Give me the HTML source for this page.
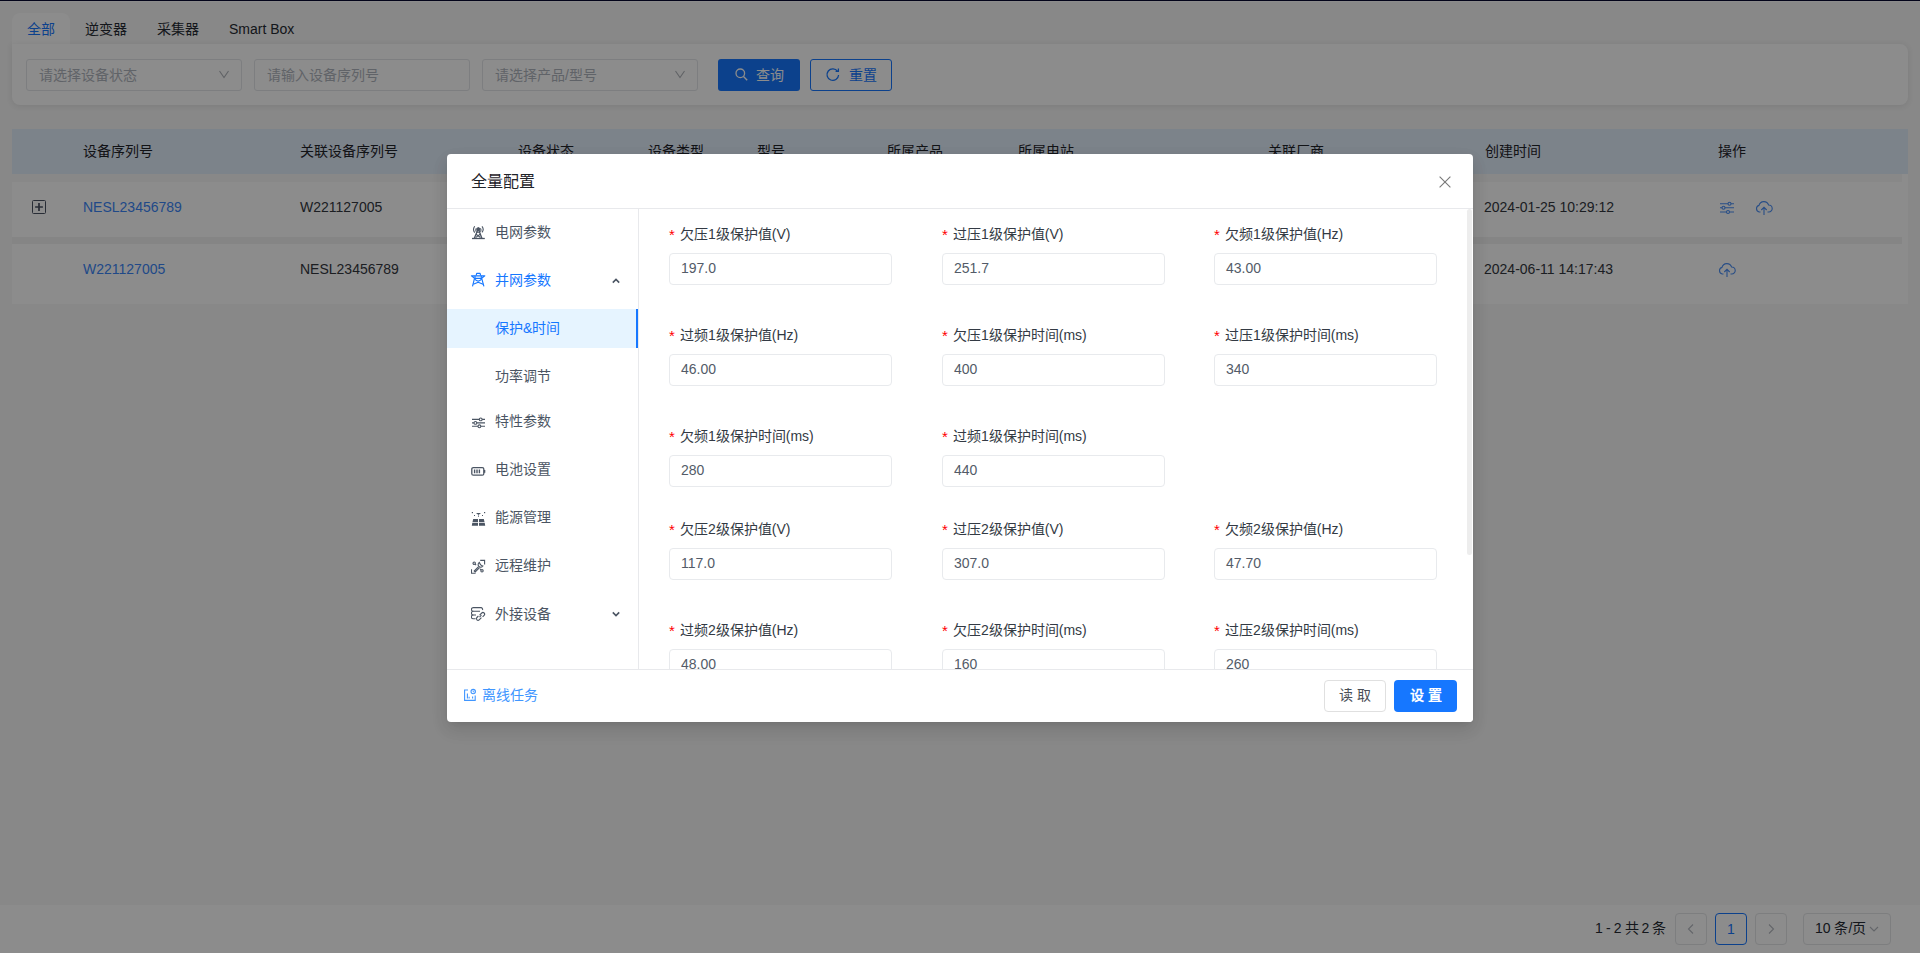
<!DOCTYPE html>
<html lang="zh-CN">
<head>
<meta charset="utf-8">
<style>
*{box-sizing:border-box;margin:0;padding:0}
html,body{width:1920px;height:953px;overflow:hidden}
body{position:relative;background:#f7f7f7;font-family:"Liberation Sans",sans-serif;font-size:14px;color:#1f2329}
.a{position:absolute;white-space:nowrap}
.topline{left:0;top:0;width:1920px;height:1px;background:#fff}
.tab-active{left:12px;top:13px;width:58px;height:32px;background:#fff;border-radius:8px 8px 0 0}
.tabtxt{top:19px;line-height:20px;font-size:14px;color:#262b33}
.filter{left:12px;top:44px;width:1896px;height:61px;background:#fff;border-radius:0 8px 8px 8px;box-shadow:0 1px 6px rgba(0,0,0,.09)}
.inp{top:59px;width:216px;height:32px;border:1px solid #e4e6ea;border-radius:3px;background:#fff}
.ph{top:65px;line-height:20px;color:#b0b5bd}
.chev{top:68px;width:14px;height:14px}
.btn{top:59px;height:32px;border-radius:3px}
.thead{left:12px;top:129px;width:1896px;height:45px;background:#e2eefc}
.th{top:141px;line-height:20px;color:#1f2329}
.row{left:12px;width:1896px;background:#fff}
.td{line-height:20px;color:#33373e}
.link{color:#3b86f7}
.pager{left:0;top:905px;width:1920px;height:48px;background:#fff}
.mask{left:0;top:0;width:1920px;height:953px;background:rgba(0,0,0,.45)}
.modal{left:447px;top:154px;width:1026px;height:568px;background:#fff;border-radius:4px;box-shadow:0 6px 16px 0 rgba(0,0,0,.08),0 3px 6px -4px rgba(0,0,0,.12),0 8px 18px 2px rgba(0,0,0,.05)}
.mtitle{font-size:16px;line-height:22px;color:#1f2329}
.mtxt{line-height:20px;color:#4b5563}
.mtxt.act{color:#1677ff}
.req{line-height:20px;color:#f00;font-size:15px}
.lab{line-height:20px;color:#333a44}
.finp{width:223px;height:32px;border:1px solid #e8eaed;border-radius:4px;background:#fff}
.fval{line-height:20px;color:#535b68}
</style>
</head>
<body>
<div class="a topline" style="top:1px"></div>
<!-- tabs -->
<div class="a tab-active"></div>
<div class="a filter"></div>
<div class="a tabtxt" style="left:27px;color:#1677ff">全部</div>
<div class="a tabtxt" style="left:85px">逆变器</div>
<div class="a tabtxt" style="left:157px">采集器</div>
<div class="a tabtxt" style="left:229px">Smart Box</div>
<!-- filter inputs -->
<div class="a inp" style="left:26px"></div>
<div class="a ph" style="left:39px">请选择设备状态</div>
<svg class="a chev" style="left:217px" viewBox="0 0 14 14"><path d="M2.5 3 L7 9.6 L11.5 3" fill="none" stroke="#b0b4ba" stroke-width="1.1"/></svg>
<div class="a inp" style="left:254px"></div>
<div class="a ph" style="left:267px">请输入设备序列号</div>
<div class="a inp" style="left:482px"></div>
<div class="a ph" style="left:495px">请选择产品/型号</div>
<svg class="a chev" style="left:673px" viewBox="0 0 14 14"><path d="M2.5 3 L7 9.6 L11.5 3" fill="none" stroke="#b0b4ba" stroke-width="1.1"/></svg>
<div class="a btn" style="left:718px;width:82px;background:#1677ff"></div>
<svg class="a" style="left:734px;top:67px;width:16px;height:16px" viewBox="0 0 16 16"><circle cx="6.3" cy="6.3" r="4.3" fill="none" stroke="#fff" stroke-width="1.3"/><path d="M9.5 9.5 L13.2 13.2" stroke="#fff" stroke-width="1.4"/></svg>
<div class="a" style="left:756px;top:65px;line-height:20px;color:#fff">查询</div>
<div class="a btn" style="left:810px;width:82px;border:1px solid #1677ff;background:#fff"></div>
<svg class="a" style="left:825px;top:67px;width:16px;height:16px" viewBox="0 0 16 16"><path d="M12.6 4.3 A5.8 5.8 0 1 0 13.6 8" fill="none" stroke="#1677ff" stroke-width="1.3"/><path d="M10.6 4.4 L13.4 4.4 L13.4 1.6" fill="none" stroke="#1677ff" stroke-width="1.3"/></svg>
<div class="a" style="left:849px;top:65px;line-height:20px;color:#1677ff">重置</div>

<!-- table -->
<div class="a thead"></div>
<div class="a th" style="left:83px">设备序列号</div>
<div class="a th" style="left:300px">关联设备序列号</div>
<div class="a th" style="left:518px">设备状态</div>
<div class="a th" style="left:648px">设备类型</div>
<div class="a th" style="left:757px">型号</div>
<div class="a th" style="left:887px">所属产品</div>
<div class="a th" style="left:1018px">所属电站</div>
<div class="a th" style="left:1268px">关联厂商</div>
<div class="a th" style="left:1485px">创建时间</div>
<div class="a th" style="left:1718px">操作</div>

<div class="a row" style="top:174px;height:130px"></div>
<div class="a" style="left:12px;top:174px;width:1890px;height:8px;background:#f8f8f8"></div>
<div class="a" style="left:12px;top:237px;width:1890px;height:7px;background:#f3f3f3"></div>
<div class="a" style="left:32px;top:200px;width:14px;height:14px;border:1px solid #4a5263;border-radius:1.5px;background:#fff"></div>
<svg class="a" style="left:32px;top:200px;width:14px;height:14px" viewBox="0 0 14 14"><path d="M3.1 7 H10.9 M7 3.1 V10.9" stroke="#4a5263" stroke-width="1.7"/></svg>
<div class="a td link" style="left:83px;top:197px">NESL23456789</div>
<div class="a td" style="left:300px;top:197px">W221127005</div>
<div class="a td" style="left:1484px;top:197px">2024-01-25 10:29:12</div>
<div class="a td link" style="left:83px;top:259px">W221127005</div>
<div class="a td" style="left:300px;top:259px">NESL23456789</div>
<div class="a td" style="left:1484px;top:259px">2024-06-11 14:17:43</div>

<!-- pager -->

<svg class="a" style="left:1719px;top:200px;width:16px;height:16px" viewBox="0 0 16 16" fill="none" stroke="#4a8ef5" stroke-width="1.1">
<path d="M1 3.7 H15 M1 7.7 H15 M1 12 H15"/>
<circle cx="10.5" cy="3.7" r="1.5" fill="#fff"/><circle cx="4.5" cy="7.7" r="1.5" fill="#fff"/><circle cx="9" cy="12" r="1.5" fill="#fff"/>
</svg>
<svg class="a" style="left:1755px;top:200px;width:18px;height:16px" viewBox="0 0 18 16" fill="none" stroke="#4a8ef5" stroke-width="1.1">
<path d="M5.5 12 H4.2 A3.4 3.4 0 0 1 4 5.4 A5 5 0 0 1 13.6 5 A3.5 3.5 0 0 1 13.8 12 H12.5"/>
<path d="M9 15 V7.5 M6.3 10 L9 7.3 L11.7 10"/>
</svg>
<svg class="a" style="left:1718px;top:262px;width:18px;height:16px" viewBox="0 0 18 16" fill="none" stroke="#4a8ef5" stroke-width="1.1">
<path d="M5.5 12 H4.2 A3.4 3.4 0 0 1 4 5.4 A5 5 0 0 1 13.6 5 A3.5 3.5 0 0 1 13.8 12 H12.5"/>
<path d="M9 15 V7.5 M6.3 10 L9 7.3 L11.7 10"/>
</svg>
<div class="a pager"></div>
<div class="a" style="left:1595px;top:918px;line-height:20px;color:#262b33;letter-spacing:-0.4px">1 - 2 共 2 条</div>
<div class="a" style="left:1675px;top:913px;width:32px;height:32px;border:1px solid #e3e5e8;border-radius:4px"></div>
<svg class="a" style="left:1684px;top:922px;width:14px;height:14px" viewBox="0 0 14 14" fill="none" stroke="#b5b9c0" stroke-width="1.1"><path d="M9 2.5 L4.5 7 L9 11.5"/></svg>
<div class="a" style="left:1715px;top:913px;width:32px;height:32px;border:1px solid #1677ff;border-radius:4px"></div>
<div class="a" style="left:1727px;top:919px;line-height:20px;color:#1677ff">1</div>
<div class="a" style="left:1755px;top:913px;width:32px;height:32px;border:1px solid #e3e5e8;border-radius:4px"></div>
<svg class="a" style="left:1764px;top:922px;width:14px;height:14px" viewBox="0 0 14 14" fill="none" stroke="#b5b9c0" stroke-width="1.1"><path d="M5 2.5 L9.5 7 L5 11.5"/></svg>
<div class="a" style="left:1803px;top:913px;width:88px;height:32px;border:1px solid #e3e5e8;border-radius:4px"></div>
<div class="a" style="left:1815px;top:918px;line-height:20px;color:#262b33">10 条/页</div>
<svg class="a" style="left:1868px;top:923px;width:12px;height:12px" viewBox="0 0 12 12" fill="none" stroke="#b5b9c0" stroke-width="1.1"><path d="M2 4 L6 8 L10 4"/></svg>


<div class="a mask"></div>

<!-- modal -->

<div class="a modal"></div>
<div class="a mtitle" style="left:471px;top:171px">全量配置</div>
<svg class="a" style="left:1437px;top:174px;width:16px;height:16px" viewBox="0 0 16 16"><path d="M2.6 2.6 L13.4 13.4 M13.4 2.6 L2.6 13.4" stroke="#7a7a7a" stroke-width="1.15"/></svg>
<div class="a" style="left:447px;top:208px;width:1026px;height:1px;background:#e8e9ec"></div>
<div class="a" style="left:638px;top:209px;width:1px;height:460px;background:#e8e9ec"></div>
<div class="a" style="left:447px;top:309px;width:191px;height:39px;background:#e6f4ff"></div>
<div class="a" style="left:636px;top:309px;width:2px;height:39px;background:#1677ff"></div>

<svg class="a" style="left:468px;top:222px;width:22px;height:20px" viewBox="0 0 22 20" fill="none" stroke="#4b5563" stroke-width="1.1">
<path d="M4 16.5 H16.8" stroke-width="1.3"/>
<path d="M6.3 16.2 L10.3 6.8 L13.9 16.2" stroke-width="1.3"/>
<path d="M8 12.2 L12.5 15.5 M12.4 12 L7.6 15.6 M8.8 10.2 H11.8"/>
<circle cx="10.3" cy="7.2" r="1.4" fill="#4b5563"/>
<path d="M6.7 4.2 Q4.3 7.5 6.7 10.6"/>
<path d="M8.3 6.2 Q7.1 8 8.3 9.7"/>
<path d="M14 4.4 Q16.4 7.5 14 10.4"/>
<path d="M12.5 6.2 Q13.6 8 12.5 9.7"/>
</svg>
<svg class="a" style="left:468px;top:270px;width:22px;height:20px" viewBox="0 0 22 20" fill="none" stroke="#1677ff" stroke-width="1.15" stroke-linejoin="round">
<path d="M8.2 5.3 L8.7 3.4 H12.1 L12.6 5.3"/>
<path d="M3.4 5.8 H16.8 L13.6 8.4 H6.6 Z"/>
<path d="M7 5.8 V8.4 M13.3 5.8 V8.4"/>
<path d="M6.5 8.4 L4.5 16.3 M13.7 8.4 L15.9 16.3"/>
<path d="M6.7 9.2 Q10.2 13 13.6 9.2"/>
<path d="M5.3 14.3 L10.2 12.3 L15.1 14.3"/>
</svg>
<svg class="a" style="left:471px;top:415px;width:15px;height:14px" viewBox="0 0 15 14" fill="none" stroke="#4b5563" stroke-width="1.1">
<path d="M1 4.4 H14 M1 7.9 H14 M1 11.3 H14"/>
<circle cx="9.7" cy="4.4" r="1.4" fill="#fff"/>
<circle cx="4.4" cy="7.9" r="1.4" fill="#fff"/>
<circle cx="8.4" cy="11.3" r="1.4" fill="#fff"/>
</svg>
<svg class="a" style="left:471px;top:464px;width:15px;height:14px" viewBox="0 0 15 14" fill="none" stroke="#4b5563" stroke-width="1.3">
<rect x="0.8" y="3.6" width="12" height="7.6" rx="1.5"/>
<path d="M13.6 6 V8.8" stroke-width="1.4"/>
<path d="M3.6 5.6 V9.2 M6 5.6 V9.2 M8.4 5.6 V9.2" stroke-width="1.4"/>
</svg>
<svg class="a" style="left:471px;top:511px;width:15px;height:16px" viewBox="0 0 15 16" fill="#4b5563">
<path d="M5 2 H10 L7.5 4 Z"/>
<rect x="7" y="4.5" width="1" height="1.2"/>
<rect x="0.8" y="1" width="1.2" height="1.2"/><rect x="13" y="1" width="1.2" height="1.2"/>
<rect x="3" y="4" width="1" height="1"/><rect x="11" y="4" width="1" height="1"/>
<path d="M2.2 8 H7 V11 H1.5 Z M8 8 H12.8 L13.5 11 H8 Z M1.3 11.8 H7 V14.8 H0.8 Z M8 11.8 H13.7 L14.2 14.8 H8 Z"/>
</svg>
<svg class="a" style="left:471px;top:559px;width:15px;height:16px" viewBox="0 0 15 16" fill="none" stroke="#4b5563" stroke-width="1.1">
<path d="M9.2 1.4 H13.6 V5.5 M0.5 10.2 V14.3 H4.6"/>
<path d="M8.3 3.4 A2.6 2.6 0 1 0 11.9 7 L10.4 6.6 L9.2 5.2 Z"/>
<path d="M7.6 7.6 L3.2 12 L4.2 13 L8.6 8.6"/>
<circle cx="3.2" cy="4.2" r="1.2"/>
<path d="M4.1 5.1 L5.1 6.1"/>
<circle cx="11" cy="11.8" r="1.2"/>
<path d="M10.1 10.9 L9.1 9.9"/>
</svg>
<svg class="a" style="left:471px;top:606px;width:15px;height:16px" viewBox="0 0 15 16" fill="none" stroke="#4b5563" stroke-width="1.1">
<path d="M9 5.3 H2.3 A1.8 1.8 0 0 1 2.3 1.6 H10 A1.8 1.8 0 0 1 11.5 4"/>
<path d="M5 9 H2.3 A1.8 1.8 0 0 1 2.3 5.3"/>
<path d="M4.5 12.8 H2.3 A1.8 1.8 0 0 1 2.3 9"/>
<path d="M8.6 9.2 L10.8 7 A1.6 1.6 0 0 1 13.1 9.3 L11.6 10.8"/>
<path d="M10.4 11.6 L8.2 13.8 A1.6 1.6 0 0 1 5.9 11.5 L7.4 10"/>
<path d="M8.5 11.1 L10.4 9.2"/>
</svg>
<svg class="a" style="left:611px;top:276px;width:10px;height:10px" viewBox="0 0 10 10" fill="none" stroke="#4b5563" stroke-width="1.6"><path d="M1.8 6.6 L5 3.4 L8.2 6.6"/></svg>
<svg class="a" style="left:611px;top:609px;width:10px;height:10px" viewBox="0 0 10 10" fill="none" stroke="#4b5563" stroke-width="1.6"><path d="M1.8 3.4 L5 6.6 L8.2 3.4"/></svg>
<svg class="a" style="left:463px;top:688px;width:14px;height:14px" viewBox="0 0 14 14" fill="none" stroke="#4096ff" stroke-width="1.1">
<path d="M5 2 H1.6 V12.4 H12.2 V7.6"/>
<path d="M4.4 5.6 V10.6 M6.1 8.8 V10.6 M9.6 8.4 V10.6"/>
<circle cx="10.2" cy="3.6" r="2.2"/>
<path d="M10.2 2.6 V3.8 H11.2" stroke-width="0.9"/>
</svg>
<div class="a mtxt act" style="left:495px;top:318px">保护&amp;时间</div>
<div class="a mtxt" style="left:495px;top:222px">电网参数</div>
<div class="a mtxt act" style="left:495px;top:270px">并网参数</div>
<div class="a mtxt" style="left:495px;top:366px">功率调节</div>
<div class="a mtxt" style="left:495px;top:411px">特性参数</div>
<div class="a mtxt" style="left:495px;top:459px">电池设置</div>
<div class="a mtxt" style="left:495px;top:507px">能源管理</div>
<div class="a mtxt" style="left:495px;top:555px">远程维护</div>
<div class="a mtxt" style="left:495px;top:604px">外接设备</div>
<!-- scrollbar -->
<div class="a" style="left:1467px;top:209px;width:5px;height:346px;background:#ededed;border-radius:3px"></div>
<div class="a req" style="left:669px;top:225px">*</div>
<div class="a lab" style="left:680px;top:224px">欠压1级保护值(V)</div>
<div class="a finp" style="left:669px;top:253px"></div>
<div class="a fval" style="left:681px;top:258px">197.0</div>
<div class="a req" style="left:942px;top:225px">*</div>
<div class="a lab" style="left:953px;top:224px">过压1级保护值(V)</div>
<div class="a finp" style="left:942px;top:253px"></div>
<div class="a fval" style="left:954px;top:258px">251.7</div>
<div class="a req" style="left:1214px;top:225px">*</div>
<div class="a lab" style="left:1225px;top:224px">欠频1级保护值(Hz)</div>
<div class="a finp" style="left:1214px;top:253px"></div>
<div class="a fval" style="left:1226px;top:258px">43.00</div>
<div class="a req" style="left:669px;top:326px">*</div>
<div class="a lab" style="left:680px;top:325px">过频1级保护值(Hz)</div>
<div class="a finp" style="left:669px;top:354px"></div>
<div class="a fval" style="left:681px;top:359px">46.00</div>
<div class="a req" style="left:942px;top:326px">*</div>
<div class="a lab" style="left:953px;top:325px">欠压1级保护时间(ms)</div>
<div class="a finp" style="left:942px;top:354px"></div>
<div class="a fval" style="left:954px;top:359px">400</div>
<div class="a req" style="left:1214px;top:326px">*</div>
<div class="a lab" style="left:1225px;top:325px">过压1级保护时间(ms)</div>
<div class="a finp" style="left:1214px;top:354px"></div>
<div class="a fval" style="left:1226px;top:359px">340</div>
<div class="a req" style="left:669px;top:427px">*</div>
<div class="a lab" style="left:680px;top:426px">欠频1级保护时间(ms)</div>
<div class="a finp" style="left:669px;top:455px"></div>
<div class="a fval" style="left:681px;top:460px">280</div>
<div class="a req" style="left:942px;top:427px">*</div>
<div class="a lab" style="left:953px;top:426px">过频1级保护时间(ms)</div>
<div class="a finp" style="left:942px;top:455px"></div>
<div class="a fval" style="left:954px;top:460px">440</div>
<div class="a req" style="left:669px;top:520px">*</div>
<div class="a lab" style="left:680px;top:519px">欠压2级保护值(V)</div>
<div class="a finp" style="left:669px;top:548px"></div>
<div class="a fval" style="left:681px;top:553px">117.0</div>
<div class="a req" style="left:942px;top:520px">*</div>
<div class="a lab" style="left:953px;top:519px">过压2级保护值(V)</div>
<div class="a finp" style="left:942px;top:548px"></div>
<div class="a fval" style="left:954px;top:553px">307.0</div>
<div class="a req" style="left:1214px;top:520px">*</div>
<div class="a lab" style="left:1225px;top:519px">欠频2级保护值(Hz)</div>
<div class="a finp" style="left:1214px;top:548px"></div>
<div class="a fval" style="left:1226px;top:553px">47.70</div>
<div class="a req" style="left:669px;top:621px">*</div>
<div class="a lab" style="left:680px;top:620px">过频2级保护值(Hz)</div>
<div class="a finp" style="left:669px;top:649px"></div>
<div class="a fval" style="left:681px;top:654px">48.00</div>
<div class="a req" style="left:942px;top:621px">*</div>
<div class="a lab" style="left:953px;top:620px">欠压2级保护时间(ms)</div>
<div class="a finp" style="left:942px;top:649px"></div>
<div class="a fval" style="left:954px;top:654px">160</div>
<div class="a req" style="left:1214px;top:621px">*</div>
<div class="a lab" style="left:1225px;top:620px">过压2级保护时间(ms)</div>
<div class="a finp" style="left:1214px;top:649px"></div>
<div class="a fval" style="left:1226px;top:654px">260</div>
<div class="a" style="left:639px;top:669px;width:834px;height:53px;background:#fff;border-radius:0 0 4px 0"></div>
<div class="a" style="left:447px;top:669px;width:1026px;height:1px;background:#e8e9ec"></div>
<div class="a" style="left:482px;top:685px;line-height:20px;color:#4096ff">离线任务</div>
<div class="a" style="left:1324px;top:680px;width:62px;height:32px;border:1px solid #e0e0e0;border-radius:4px;background:#fff"></div>
<div class="a" style="left:1339px;top:685px;line-height:20px;color:#4a4f57;letter-spacing:4px">读取</div>
<div class="a" style="left:1394px;top:680px;width:63px;height:32px;border-radius:4px;background:#1677ff"></div>
<div class="a" style="left:1410px;top:685px;line-height:20px;color:#fff;font-weight:bold;letter-spacing:4px">设置</div>

<div class="a" style="left:0;top:0;width:1920px;height:1px;background:#03041a"></div>
</body>
</html>
